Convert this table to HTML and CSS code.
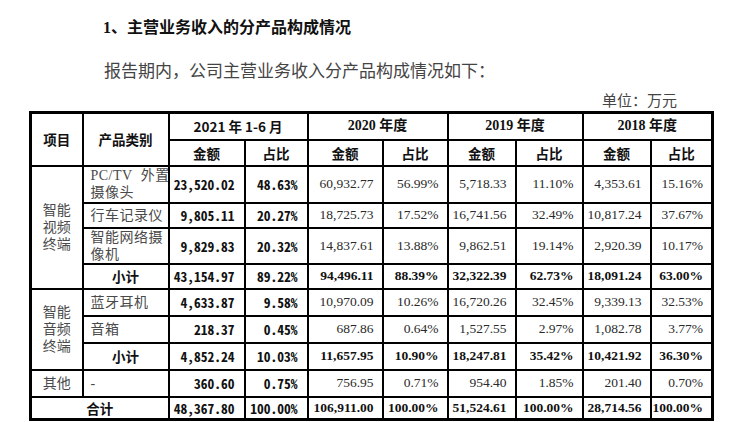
FILE: index.html
```html
<!DOCTYPE html>
<html lang="zh-CN">
<head>
<meta charset="utf-8">
<title>主营业务收入的分产品构成情况</title>
<link rel="stylesheet" href="styles.css">
</head>
<body>
<div class="page">
  <h1 class="title">1、主营业务收入的分产品构成情况</h1>
  <p class="intro">报告期内，公司主营业务收入分产品构成情况如下：</p>
  <div class="unit">单位：万元</div>
  <table class="data">
    <colgroup>
      <col class="c-item"><col class="c-cat"><col class="c-a21"><col class="c-p21">
      <col class="c-a20"><col class="c-p20"><col class="c-a19"><col class="c-p19">
      <col class="c-a18"><col class="c-p18">
    </colgroup>
    <thead>
      <tr class="h1">
        <th rowspan="2" class="hd">项目</th>
        <th rowspan="2" class="hd">产品类别</th>
        <th colspan="2" class="hd">2021 年 1-6 月</th>
        <th colspan="2" class="hy">2020 年度</th>
        <th colspan="2" class="hy">2019 年度</th>
        <th colspan="2" class="hy">2018 年度</th>
      </tr>
      <tr class="h2">
        <th class="hd">金额</th><th class="hd">占比</th>
        <th class="hd">金额</th><th class="hd">占比</th>
        <th class="hd">金额</th><th class="hd">占比</th>
        <th class="hd">金额</th><th class="hd">占比</th>
      </tr>
    </thead>
    <tbody>
      <tr class="r-tall">
        <td rowspan="4" class="grp">智能<br>视频<br>终端</td>
        <td class="cat">PC/TV&nbsp; 外置<br>摄像头</td>
        <td class="m">23,520.02</td><td class="m">48.63%</td>
        <td class="n">60,932.77</td><td class="n">56.99%</td>
        <td class="n">5,718.33</td><td class="n">11.10%</td>
        <td class="n">4,353.61</td><td class="n">15.16%</td>
      </tr>
      <tr class="r-a">
        <td class="cat">行车记录仪</td>
        <td class="m">9,805.11</td><td class="m">20.27%</td>
        <td class="n">18,725.73</td><td class="n">17.52%</td>
        <td class="n">16,741.56</td><td class="n">32.49%</td>
        <td class="n">10,817.24</td><td class="n">37.67%</td>
      </tr>
      <tr class="r-tall2">
        <td class="cat">智能网络摄<br>像机</td>
        <td class="m">9,829.83</td><td class="m">20.32%</td>
        <td class="n">14,837.61</td><td class="n">13.88%</td>
        <td class="n">9,862.51</td><td class="n">19.14%</td>
        <td class="n">2,920.39</td><td class="n">10.17%</td>
      </tr>
      <tr class="r-a sub">
        <td class="cat-c">小计</td>
        <td class="m">43,154.97</td><td class="m">89.22%</td>
        <td class="n">94,496.11</td><td class="n">88.39%</td>
        <td class="n">32,322.39</td><td class="n">62.73%</td>
        <td class="n">18,091.24</td><td class="n">63.00%</td>
      </tr>
      <tr class="r-b">
        <td rowspan="3" class="grp">智能<br>音频<br>终端</td>
        <td class="cat">蓝牙耳机</td>
        <td class="m">4,633.87</td><td class="m">9.58%</td>
        <td class="n">10,970.09</td><td class="n">10.26%</td>
        <td class="n">16,720.26</td><td class="n">32.45%</td>
        <td class="n">9,339.13</td><td class="n">32.53%</td>
      </tr>
      <tr class="r-b">
        <td class="cat">音箱</td>
        <td class="m">218.37</td><td class="m">0.45%</td>
        <td class="n">687.86</td><td class="n">0.64%</td>
        <td class="n">1,527.55</td><td class="n">2.97%</td>
        <td class="n">1,082.78</td><td class="n">3.77%</td>
      </tr>
      <tr class="r-b sub">
        <td class="cat-c">小计</td>
        <td class="m">4,852.24</td><td class="m">10.03%</td>
        <td class="n">11,657.95</td><td class="n">10.90%</td>
        <td class="n">18,247.81</td><td class="n">35.42%</td>
        <td class="n">10,421.92</td><td class="n">36.30%</td>
      </tr>
      <tr class="r-b">
        <td class="grp">其他</td>
        <td class="cat">-</td>
        <td class="m">360.60</td><td class="m">0.75%</td>
        <td class="n">756.95</td><td class="n">0.71%</td>
        <td class="n">954.40</td><td class="n">1.85%</td>
        <td class="n">201.40</td><td class="n">0.70%</td>
      </tr>
      <tr class="r-c sub">
        <td colspan="2" class="cat-c">合计</td>
        <td class="m">48,367.80</td><td class="m">100.00%</td>
        <td class="n">106,911.00</td><td class="n">100.00%</td>
        <td class="n">51,524.61</td><td class="n">100.00%</td>
        <td class="n">28,714.56</td><td class="n">100.00%</td>
      </tr>
    </tbody>
  </table>
</div>
</body>
</html>
```

FILE: styles.css
```css
html, body {
  margin: 0;
  padding: 0;
  background: #ffffff;
}

.page {
  width: 741px;
  height: 422px;
  overflow: hidden;
  padding: 0 0 0 29px;
  box-sizing: border-box;
  font-family: "Liberation Serif", "Noto Sans CJK SC", serif;
  color: #222;
}

.title {
  margin: 16px 0 0 0;
  padding-left: 74px;
  font-size: 16px;
  line-height: 24px;
  font-weight: 700;
  color: #111;
  font-family: "Liberation Serif", "Noto Sans CJK SC", serif;
}

.intro {
  margin: 20px 0 0 0;
  padding-left: 75px;
  font-size: 17px;
  line-height: 24px;
  color: #444;
}

.unit {
  margin-top: 7px;
  width: 648px;
  text-align: right;
  font-size: 15px;
  line-height: 20px;
  color: #444;
}

.data {
  border-collapse: collapse;
  table-layout: fixed;
  width: 684px;
  border: 3px solid #000;
  margin-top: 0;
}

.c-item { width: 52px; }
.c-cat { width: 86px; }
.c-a21 { width: 76px; }
.c-p21 { width: 63px; }
.c-a20 { width: 75px; }
.c-p20 { width: 65px; }
.c-a19 { width: 68px; }
.c-p19 { width: 67px; }
.c-a18 { width: 68px; }
.c-p18 { width: 62px; }

.data th,
.data td {
  border: 2px solid #000;
  padding: 0;
  vertical-align: middle;
  overflow: hidden;
  white-space: nowrap;
}

.h1 { height: 27px; }
.h2 { height: 26px; }
.r-tall { height: 37px; }
.r-tall2 { height: 36px; }
.r-a { height: 25px; }
.r-b { height: 27px; }
.r-c { height: 23px; }

.hd {
  font-family: "Noto Sans CJK SC", sans-serif;
  font-weight: 700;
  font-size: 13.5px;
  line-height: 16px;
  color: #111;
  text-align: center;
}

.hy {
  font-family: "Liberation Serif", "Noto Sans CJK SC", serif;
  font-weight: 700;
  font-size: 14px;
  line-height: 16px;
  color: #111;
  text-align: center;
}

.grp {
  text-align: center;
  font-size: 14px;
  line-height: 17px;
  color: #4a4a4a;
  font-family: "Liberation Serif", "Noto Sans CJK SC", serif;
  font-weight: 400;
}

.cat {
  text-align: left;
  padding-left: 7px !important;
  font-size: 14px;
  line-height: 17px;
  color: #4a4a4a;
  font-family: "Liberation Serif", "Noto Sans CJK SC", serif;
  letter-spacing: 0.5px;
}

.cat-c {
  text-align: center;
  font-family: "Noto Sans CJK SC", sans-serif;
  font-weight: 700;
  font-size: 13.5px;
  line-height: 16px;
  color: #111;
}

.m {
  text-align: right;
  padding-right: 9px !important;
  font-family: "Noto Sans Mono CJK SC", "DejaVu Sans Mono", monospace;
  font-weight: 700;
  font-size: 13.5px;
  line-height: 16px;
  color: #111;
}

.n {
  text-align: right;
  padding-right: 8px !important;
  font-family: "Liberation Serif", serif;
  font-size: 13.5px;
  line-height: 16px;
  color: #2a2a2a;
}

.sub .n {
  font-weight: 700;
  color: #111;
}
```
